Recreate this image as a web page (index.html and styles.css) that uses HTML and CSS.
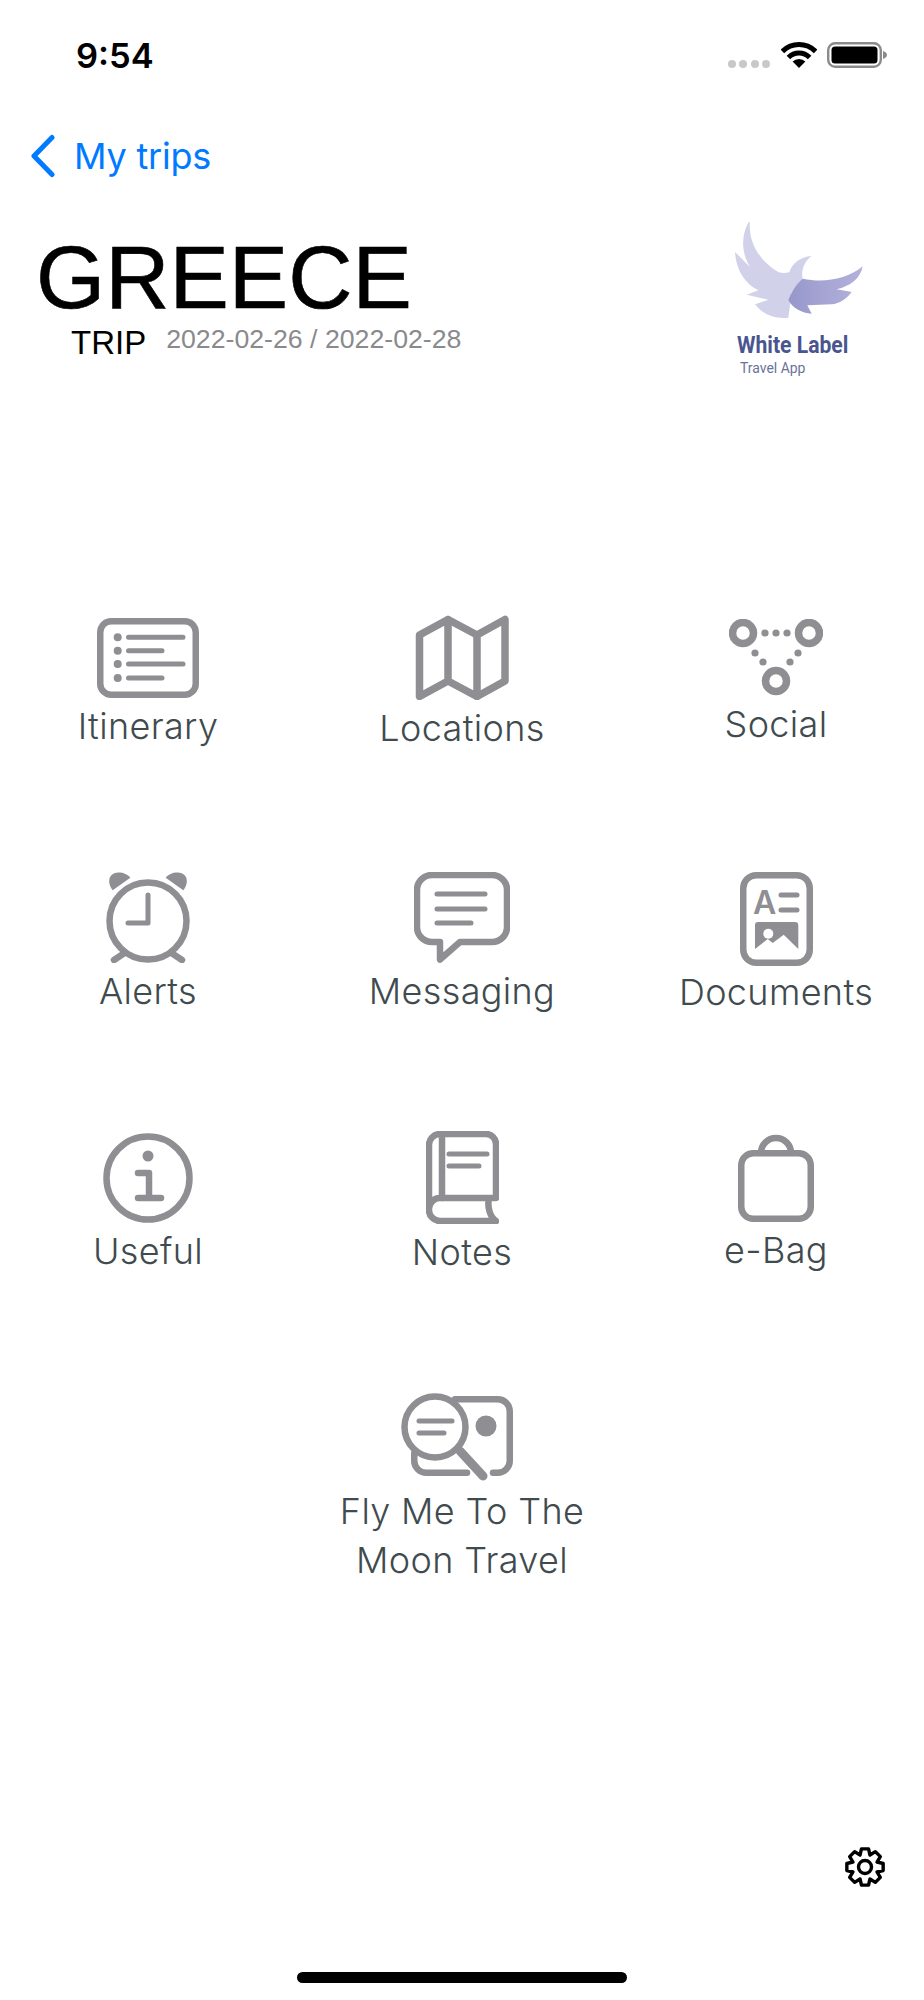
FILE: index.html
```html
<!DOCTYPE html>
<html lang="en">
<head>
  <meta charset="UTF-8" />
  <meta name="viewport" content="width=device-width, initial-scale=1.0" />
  <title>Greece trip</title>
  <link rel="stylesheet" href="styles.css">
</head>
<body>

  <!-- Status bar -->
  <div class="status">
    <span class="time">9:54</span>
    <div class="status-icons">
      <div class="signal"><i></i><i></i><i></i><i></i></div>
      <svg class="wifi" width="36" height="26" viewBox="0 0 36 26">
        <path d="M1.4 9.4A23.5 23.5 0 0 1 34.6 9.4M7.4 15.4A15 15 0 0 1 28.6 15.4" fill="none" stroke="#000" stroke-width="5"/>
        <path d="M18 26L11.6 19.6A9 9 0 0 1 24.4 19.6Z" fill="#000"/>
      </svg>
      <svg class="battery" width="60" height="26" viewBox="0 0 60 26">
        <rect x="1.2" y="1.2" width="52.6" height="23.6" rx="7" fill="none" stroke="#8a8a8a" stroke-width="2.4"/>
        <rect x="4.5" y="4.5" width="46" height="17" rx="3.5" fill="#000"/>
        <path d="M56 9c2.5 .8 4 2.2 4 4s-1.500 3.200-4 4z" fill="#8a8a8a"/>
      </svg>
    </div>
  </div>

  <!-- Back link -->
  <a class="back">
    <svg width="26" height="44" viewBox="0 0 26 44">
      <path d="M22 3.500L4 22L22 40.500" fill="none" stroke="#007aff" stroke-width="5" stroke-linecap="round" stroke-linejoin="round"/>
    </svg>
    <span>My trips</span>
  </a>

  <!-- Trip header -->
  <header class="head">
    <div class="head-text">
      <h1>GREECE</h1>
      <div class="sub">
        <span class="trip">TRIP</span>
        <span class="dates">2022-02-26 / 2022-02-28</span>
      </div>
    </div>
    <div class="logo">
      <svg width="128" height="96" viewBox="105 65 384 288">
        <defs>
          <linearGradient id="wing" x1="0" x2="1" y1="0" y2="0">
            <stop offset="0" stop-color="#9897cb"/>
            <stop offset="1" stop-color="#b3b2dc"/>
          </linearGradient>
        </defs>
        <path d="M150 58C145 105 160 170 235 215C245 219 258 219 268 215C278 188 300 170 334 167C312 185 303 210 308 235L275 275L265 352C225 356 190 345 165 312L205 298L140 283L175 270C135 250 108 210 105 155L150 200C125 160 120 105 150 58Z" fill="#d1d2ea"/>
        <path d="M308 235C370 248 440 238 488 198C482 235 450 258 410 267L455 275C440 295 418 310 395 312L322 315L335 340C305 338 280 325 265 300C275 272 290 250 308 235Z" fill="url(#wing)"/>
      </svg>
      <div class="logo-name"><span>White Label</span></div>
      <div class="logo-tag"><span>Travel App</span></div>
    </div>
  </header>

  <!-- Menu -->
  <nav class="menu">
    <a class="item">
      <svg width="102" height="80" viewBox="0 0 102 80">
        <rect class="line" x="3.250" y="3.250" width="95.500" height="73.500" rx="11"/>
        <circle class="fill" cx="20.700" cy="19.300" r="4"/>
        <circle class="fill" cx="20.700" cy="32.700" r="4"/>
        <circle class="fill" cx="20.700" cy="46" r="4"/>
        <circle class="fill" cx="20.700" cy="60" r="4"/>
        <path class="thin" d="M31.500 19.300H86M31.500 32.700H65M31.500 46H86M31.500 60H65"/>
      </svg>
      <span>Itinerary</span>
    </a>
    <a class="item">
      <svg width="94" height="85" viewBox="0 0 94 85">
        <path class="line map" d="M4.500 20L33 4.500L62 20L90 4.500V66L62 81.500L33 66L4.500 81.500ZM33 4.500V66M62 20V81.500"/>
      </svg>
      <span>Locations</span>
    </a>
    <a class="item">
      <svg width="94" height="77" viewBox="0 0 94 77">
        <circle class="ring" cx="14" cy="14" r="10.500"/>
        <circle class="ring" cx="80" cy="14" r="10.500"/>
        <circle class="ring" cx="47" cy="62" r="10.500"/>
        <circle class="fill" cx="36" cy="14" r="3.600"/>
        <circle class="fill" cx="47" cy="14" r="3.600"/>
        <circle class="fill" cx="58" cy="14" r="3.600"/>
        <circle class="fill" cx="26" cy="34" r="3.600"/>
        <circle class="fill" cx="34" cy="43" r="3.600"/>
        <circle class="fill" cx="69" cy="34" r="3.600"/>
        <circle class="fill" cx="61" cy="43" r="3.600"/>
      </svg>
      <span>Social</span>
    </a>

    <a class="item">
      <svg width="84" height="91" viewBox="0 0 84 91">
        <circle class="line" cx="42" cy="49" r="38.500"/>
        <path class="fill" d="M6.700 18.300L24.300 5.700C20 0 8 -2 4 5C2.500 9 3 14 6.700 18.300Z"/>
        <path class="fill" d="M77.300 18.300L59.700 5.700C64 0 76 -2 80 5C81.500 9 81 14 77.300 18.300Z"/>
        <path class="line" d="M17 82L8 88M67 82L76 88"/>
        <path class="thin" d="M42 23V51H22"/>
      </svg>
      <span>Alerts</span>
    </a>
    <a class="item">
      <svg width="96" height="91" viewBox="0 0 96 91">
        <path class="line" d="M18 3H78A15 15 0 0 1 93 18V55A15 15 0 0 1 78 70H46L26 87.500V70H18A15 15 0 0 1 3 55V18A15 15 0 0 1 18 3Z"/>
        <path class="thin" d="M23 22H71M23 37H71M23 51H57"/>
      </svg>
      <span>Messaging</span>
    </a>
    <a class="item">
      <svg class="doc-icon" width="73" height="94" viewBox="0 0 73 94">
        <rect class="line" x="3.250" y="3.250" width="66.500" height="87.500" rx="13"/>
        <text class="doc-letter" x="13" y="42">A</text>
        <path class="thin" d="M41 23H57M41 38H57"/>
        <path class="fill" d="M18 50H55A3.300 3.300 0 0 1 58.300 53.300V77L43.700 62.700L32.700 71L27.700 67L15 77V53A3 3 0 0 1 18 50Z"/>
        <circle cx="28.300" cy="61.700" r="5" fill="#fff"/>
      </svg>
      <span>Documents</span>
    </a>

    <a class="item">
      <svg width="90" height="90" viewBox="0 0 90 90">
        <circle class="line" cx="45" cy="45" r="41.500"/>
        <circle class="fill" cx="45" cy="23" r="5.500"/>
        <path class="line" d="M35 40H46V65M35 65H58"/>
      </svg>
      <span>Useful</span>
    </a>
    <a class="item">
      <svg width="73" height="93" viewBox="0 0 73 93">
        <path class="line" d="M14 3H60A10 10 0 0 1 70 13V67H14A11 11 0 0 0 3 78.500A11 11 0 0 0 14 90H70C64 86 61 76 63 67M3 78.500V14A11 11 0 0 1 14 3"/>
        <path class="line" d="M16 3V67"/>
        <path class="thin" d="M23 23H61M23 35H53"/>
      </svg>
      <span>Notes</span>
    </a>
    <a class="item">
      <svg width="76" height="89" viewBox="0 0 76 89">
        <rect class="line" x="3.250" y="20.250" width="69.500" height="65.500" rx="12"/>
        <path class="handle-arc" d="M23 20A15 15 0 0 1 53 20"/>
      </svg>
      <span>e-Bag</span>
    </a>

    <a class="item wide">
      <svg width="124" height="90" viewBox="0 0 124 90">
        <path class="line" d="M55 6.250H97.500A12 12 0 0 1 109.750 18.500V67.500A12 12 0 0 1 97.500 79.750H93M14.250 60V67.500A12 12 0 0 0 26.500 79.750H67"/>
        <circle class="line" cx="35" cy="34" r="30.500"/>
        <path class="handle" d="M60 58L83 83"/>
        <circle class="fill" cx="86" cy="33" r="10.500"/>
        <path class="thin" d="M19 28H52M19 40H44"/>
      </svg>
      <span>Fly Me To The<br>Moon Travel</span>
    </a>
  </nav>

  <!-- Settings -->
  <div class="settings">
    <svg width="44" height="44" viewBox="-22 -22 44 44">
      <polygon points="18.160,3.530 12,4.970 15.340,10.350 10.350,15.340 4.970,12 3.530,18.160 -3.530,18.160 -4.970,12 -10.350,15.340 -15.340,10.350 -12,4.970 -18.160,3.530 -18.160,-3.530 -12,-4.970 -15.340,-10.350 -10.350,-15.340 -4.970,-12 -3.530,-18.160 3.530,-18.160 4.970,-12 10.350,-15.340 15.340,-10.350 12,-4.970 18.160,-3.530" fill="none" stroke="#000" stroke-width="3.400" stroke-linejoin="round"/>
      <circle r="6.500" fill="none" stroke="#000" stroke-width="3.400"/>
    </svg>
  </div>

  <div class="home-bar"></div>

</body>
</html>
```

FILE: styles.css
```css
/* Reset */
*, *::before, *::after {
  box-sizing: border-box;
}
body {
  margin: 0;
  background: #fff;
  font-family: Inter, sans-serif;
}
a {
  color: inherit;
  text-decoration: none;
}

/* Status bar */
.status {
  display: flex;
  justify-content: space-between;
  height: 134px;
  padding: 36px 37px 0 76px;
}
.time {
  font-size: 34.500px;
  font-weight: 600;
  line-height: 40px;
  color: #000;
}
.status-icons {
  display: flex;
  align-items: flex-end;
  height: 26px;
  margin-top: 6px;
}
.signal {
  display: flex;
  gap: 3.500px;
  margin-right: 11px;
}
.signal i {
  display: block;
  width: 8px;
  height: 8px;
  border-radius: 50%;
  background: #c8c8c8;
}
.wifi {
  display: block;
  margin-right: 10px;
}
.battery {
  display: block;
}

/* Back link */
.back {
  display: flex;
  align-items: center;
  gap: 18px;
  height: 44px;
  padding-left: 30px;
  font-size: 36px;
  letter-spacing: -0.2px;
  line-height: 44px;
  color: #007aff;
}

/* Trip header */
.head {
  display: flex;
  justify-content: space-between;
  height: 160px;
  margin-top: 44px;
  padding: 0 61px 0 36px;
}
.head-text {
  padding-top: 11px;
  font-family: "Liberation Sans", sans-serif;
}
h1 {
  margin: 0;
  font-size: 89px;
  font-weight: 400;
  line-height: 88px;
  color: #000;
  -webkit-text-stroke: 0.6px #000;
}
.sub {
  display: flex;
  gap: 20px;
  padding: 2.500px 0 0 35px;
}
.trip {
  font-size: 33px;
  line-height: 38px;
  color: #000;
}
.dates {
  margin-top: -1px;
  font-size: 26.700px;
  line-height: 32px;
  color: #8a8a8e;
}
.logo svg {
  display: block;
}
.logo-name {
  margin-top: 13px;
  padding-left: 2px;
  font-family: Roboto, sans-serif;
  font-size: 24px;
  font-weight: 700;
  line-height: 28px;
  color: #4a5590;
}
.logo-tag {
  padding-left: 5px;
  font-family: Roboto, sans-serif;
  font-size: 15.500px;
  line-height: 18px;
  color: #6b7299;
}
.logo-name span {
  display: inline-block;
  white-space: nowrap;
  transform: scaleX(0.88);
  transform-origin: left;
}
.logo-tag span {
  display: inline-block;
  white-space: nowrap;
  transform: scaleX(0.9);
  transform-origin: left;
}

/* Menu grid */
.menu {
  display: grid;
  grid-template-columns: repeat(3, 160px);
  grid-template-rows: repeat(3, 260px) 310px;
  column-gap: 154px;
  justify-content: center;
  align-items: center;
  margin-top: 172px;
}
.item {
  display: flex;
  flex-direction: column;
  align-items: center;
  gap: 4px;
  font-size: 36px;
  font-weight: 350;
  letter-spacing: 0.35px;
  line-height: 49px;
  color: #3f4b4e;
  text-align: center;
  white-space: nowrap;
}
.item svg {
  display: block;
}
.item .doc-icon {
  margin-bottom: -2px;
}
.wide {
  grid-column: 2;
}
.line {
  fill: none;
  stroke: #8e8e93;
  stroke-width: 6.500;
  stroke-linecap: round;
  stroke-linejoin: round;
}
.map {
  stroke-width: 7.500;
}
.ring {
  fill: none;
  stroke: #8e8e93;
  stroke-width: 7.500;
}
.thin {
  fill: none;
  stroke: #8e8e93;
  stroke-width: 5;
  stroke-linecap: round;
  stroke-linejoin: round;
}
.handle {
  fill: none;
  stroke: #8e8e93;
  stroke-width: 9;
  stroke-linecap: round;
}
.handle-arc {
  fill: none;
  stroke: #8e8e93;
  stroke-width: 6.500;
}
.fill {
  fill: #8e8e93;
}
.doc-letter {
  font-family: Inter, sans-serif;
  font-size: 32px;
  font-weight: 600;
  fill: #8e8e93;
}

/* Settings + home indicator */
.settings {
  display: flex;
  justify-content: flex-end;
  margin-top: 201px;
  padding-right: 37px;
}
.settings svg {
  display: block;
}
.home-bar {
  width: 330px;
  height: 11px;
  margin: 83px auto 0;
  border-radius: 6px;
  background: #000;
}
```
